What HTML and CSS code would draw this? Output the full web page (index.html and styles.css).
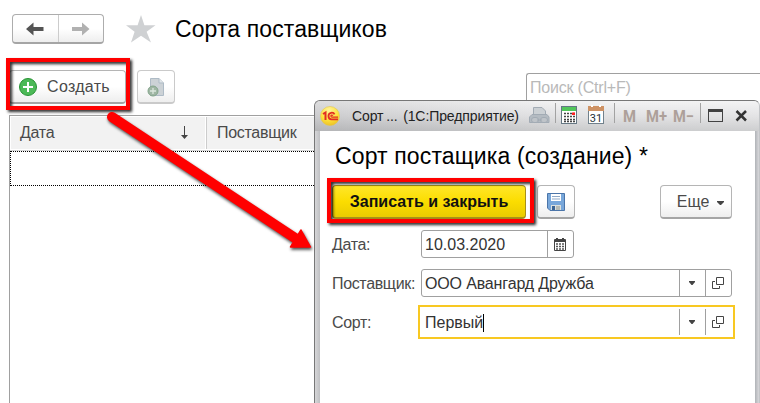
FILE: index.html
```html
<!DOCTYPE html>
<html lang="ru">
<head>
<meta charset="utf-8">
<title>Сорта поставщиков</title>
<link rel="stylesheet" href="styles.css">
</head>
<body>
<main class="page">
  <header class="heading">
    <div class="history">
      <button class="history-btn" aria-label="Назад"><svg width="18" height="14" viewBox="0 0 18 14"><path d="M0 7 7.500 .5V5H17.500V9H7.500V13.500Z" fill="#545454"/></svg></button>
      <button class="history-btn" aria-label="Вперед"><svg width="18" height="14" viewBox="0 0 18 14"><path d="M17.500 7 10 .5V5H0V9H10V13.500Z" fill="#b1b1b1"/></svg></button>
    </div>
    <svg class="star" width="30" height="28" viewBox="0 0 30 28"><path d="M15 0 18.400 10.300H29.500L20.600 16.700 25 27.500 15 20.700 5 27.500 8.600 16.700 0 10.300H11.600Z" fill="#cfd1d3"/></svg>
    <h1 class="page-title">Сорта поставщиков</h1>
  </header>
  <div class="toolbar">
    <button class="btn create"><svg width="18" height="18" viewBox="0 0 18 18"><circle cx="9" cy="9" r="8.500" fill="#4cb957" stroke="#279234"/><path d="M9 4V14M4 9H14" stroke="#fff" stroke-width="2"/></svg><span>Создать</span></button>
    <button class="btn copy" aria-label="Скопировать"><svg width="18" height="20" viewBox="0 0 18 20"><path d="M3.500 1.500H12L16.500 6V18.500H3.500Z" fill="#ccd2d6" stroke="#aebbc6"/><path d="M12 1.500V6H16.500" fill="#e1e6e9" stroke="#aebbc6"/><circle cx="6" cy="14" r="5" fill="#9fb6a4" stroke="#83a58a"/><path d="M6 11V17M3 14H9" stroke="#dce7de" stroke-width="1.300"/></svg></button>
    <div class="search">Поиск (Ctrl+F)</div>
  </div>
  <section class="table">
    <div class="table-head">
      <div class="cell date"><span>Дата</span><svg width="9" height="14" viewBox="0 0 9 14"><path d="M4.500 0V12" stroke="#444"/><path d="M1 9H8L4.500 13Z" fill="#444"/></svg></div>
      <div class="cell">Поставщик</div>
    </div>
    <div class="table-row"></div>
  </section>
</main>

<section class="dialog">
  <div class="titlebar">
    <svg class="logo" width="20" height="20" viewBox="0 0 20 20"><defs><radialGradient id="sun" cx=".45" cy=".2" r=".85"><stop offset="0" stop-color="#fff39a"/><stop offset=".6" stop-color="#fde13a"/><stop offset="1" stop-color="#eabc24"/></radialGradient></defs><circle cx="10" cy="10" r="9.500" fill="url(#sun)" stroke="#e3c64b" stroke-width=".6"/><path d="M3 8 5.500 6.500V14" fill="none" stroke="#e22d22" stroke-width="2"/><path d="M14.500 8.300C13.500 6 8.500 6 8.500 10 8.500 12.200 9.800 13.300 11.500 13.300H18" fill="none" stroke="#e22d22" stroke-width="1.800"/><path d="M13 9.500C12 8.700 10.900 9 10.900 10 10.900 10.900 11.300 11.200 12 11.200H18" fill="none" stroke="#e22d22" stroke-width="1.200"/></svg>
    <span class="window-name">Сорт ...&nbsp; (1С:Предприятие)</span>
    <svg class="tools" width="230" height="30" viewBox="0 0 230 30">
      <g stroke="#a2abb4" fill="#bfc4c9"><path d="M4.500 16V6.500H13L16.500 10V16" fill="#cbd0d4"/><path d="M3 13.500H18L20 16V21.500H.5V16Z" fill="#b4bbc2"/><rect x="2.500" y="16.500" width="7" height="5" rx="2.500"/><rect x="11.500" y="16.500" width="7" height="5" rx="2.500"/><path d="M8 19H13"/></g>
      <path d="M26.500 2V22M85.500 2V22M171.500 2V22" stroke="#a2a2a2"/>
      <rect x="32.500" y="5.500" width="15" height="17" fill="#fff" stroke="#657783"/><path d="M33 6H47V10H33Z" fill="#52c65b"/><path d="M35 12.500H46M35 15.500H46M35 18.500H46M35 20.500H46" stroke="#444" stroke-width="1.500" stroke-dasharray="2 1"/><path d="M43 11.500H46V14H43Z" fill="#ff2020"/>
      <rect x="59.500" y="6.500" width="15" height="16" fill="#fff" stroke="#71818c"/><path d="M59 5H75V10H59Z" fill="#ce9264"/><path d="M62 4H64V6H62ZM70 4H72V6H70Z" fill="#fff"/><text x="67" y="20.500" class="day">31</text>
      <g class="memory"><text x="94" y="21" textLength="13" lengthAdjust="spacingAndGlyphs">M</text><text x="117" y="21" textLength="21" lengthAdjust="spacingAndGlyphs">M+</text><text x="144" y="21" textLength="21" lengthAdjust="spacingAndGlyphs">M−</text></g>
      <rect x="179.500" y="8.500" width="14" height="12" fill="none" stroke="#424242"/><path d="M179 9.500H194" stroke="#424242" stroke-width="3"/>
      <path d="M207.500 10 217 19.500M217 10 207.500 19.500" stroke="#333" stroke-width="2.500"/>
    </svg>
  </div>
  <div class="dialog-body">
    <h2 class="dialog-title">Сорт постащика (создание) *</h2>
    <div class="actions">
      <button class="btn primary">Записать и закрыть</button>
      <button class="btn save" aria-label="Записать"><svg width="18" height="18" viewBox="0 0 18 18"><path d="M.5 .5H17.500V17.500H3L.5 15Z" fill="#78a7da" stroke="#4b75a9"/><path d="M4 1H14V8H4Z" fill="#fff"/><path d="M5 3.500H13M5 6H13" stroke="#8ea9c8"/><path d="M4 12H14V17H4Z" fill="#dce0dd"/><path d="M9 13H13V17H9Z" fill="#b5bab5"/><path d="M5 13H8V17H5Z" fill="#3b6494"/></svg></button>
      <button class="btn more"><span>Еще</span><svg width="7" height="4" viewBox="0 0 7 4"><path d="M0 0H7V1L4 4H3L0 1Z" fill="#444"/></svg></button>
    </div>
    <div class="form">
      <label class="label">Дата:</label>
      <div class="field date-field"><span class="value date-value">10.03.2020</span><span class="field-btn"><svg width="12" height="13" viewBox="0 0 12 13"><path d="M0 2Q0 1 1 1H2V0H4V1H8V0H10V1H11Q12 1 12 2V12Q12 13 11 13H1Q0 13 0 12Z" fill="#444"/><path d="M1 4H11V12H1Z" fill="#fff"/><path d="M2 6H10M2 8.500H10M2 11H10" stroke="#555" stroke-width="1.300" stroke-dasharray="2 1"/></svg></span></div>
      <label class="label">Поставщик:</label>
      <div class="field"><span class="value">ООО Авангард Дружба</span><span class="field-btn drop"><svg width="6" height="4" viewBox="0 0 6 4"><path d="M0 0H6V1L3.500 4H2.500L0 1Z" fill="#444"/></svg></span><span class="field-btn open"><svg width="12" height="12" viewBox="0 0 12 12" fill="none" stroke="#444"><path d="M4.500 .5H11.500V7.500H4.500ZM3 4.500H.5V11.500H7.500V9"/></svg></span></div>
      <label class="label">Сорт:</label>
      <div class="field focused"><span class="value">Первый<i class="caret"></i></span><span class="field-btn drop"><svg width="6" height="4" viewBox="0 0 6 4"><path d="M0 0H6V1L3.500 4H2.500L0 1Z" fill="#444"/></svg></span><span class="field-btn open"><svg width="12" height="12" viewBox="0 0 12 12" fill="none" stroke="#444"><path d="M4.500 .5H11.500V7.500H4.500ZM3 4.500H.5V11.500H7.500V9"/></svg></span></div>
    </div>
  </div>
</section>

<div class="marker marker-create"></div>
<div class="marker marker-save"></div>
<svg class="arrow" width="760" height="403" viewBox="0 0 760 403"><path d="M112 117 298 240" stroke="#f00" stroke-width="10" stroke-linecap="round"/><path d="M301 230 310.500 247H290.500Z" fill="#f00" stroke="#f00" stroke-linejoin="round" stroke-width="1.500"/></svg>
</body>
</html>
```

FILE: styles.css
```css
* { box-sizing: border-box; }
body {
  margin: 0;
  width: 760px;
  height: 403px;
  overflow: hidden;
  position: relative;
  background: #fff;
  color: #4a4a4a;
  font: 16px "Liberation Sans", Arial, sans-serif;
}
svg { display: block; flex: none; }
button { font: inherit; color: inherit; padding: 0; margin: 0; }
h1, h2 { margin: 0; font-weight: 400; color: #000; white-space: nowrap; }

.page { padding: 14px 0 0 9px; }
.heading { display: flex; height: 30px; align-items: center; padding-left: 3px; }
.history {
  display: flex;
  width: 92px;
  height: 30px;
  border: 1px solid #adadad;
  border-bottom: 2px solid #a5a5a5;
  border-radius: 4px;
  background: linear-gradient(#fff 50%, #eee);
}
.history-btn {
  flex: 1;
  display: flex;
  align-items: center;
  justify-content: center;
  border: 0;
  background: none;
}
.history-btn + .history-btn { border-left: 1px solid #ccc; }
.star { margin-left: 22px; }
.page-title { margin-left: 19px; font-size: 23px; line-height: 30px; letter-spacing: 0.1px; }

.toolbar { display: flex; margin-top: 26px; height: 34px; }
.btn {
  display: flex;
  flex: none;
  align-items: center;
  justify-content: center;
  height: 34px;
  border: 1px solid #b5b5b5;
  border-bottom: 2px solid #a5a5a5;
  border-radius: 4px;
  background: linear-gradient(#fff 50%, #eee);
  white-space: nowrap;
}
.create { width: 117px; gap: 10px; padding-right: 6px; letter-spacing: 0.3px; }
.copy { width: 38px; margin-left: 11px; border-color: #cacaca; }
.search {
  width: 234px;
  height: 34px;
  margin: 3px 0 0 351px;
  padding-left: 3px;
  flex: none;
  border: 1px solid #a0a0a0;
  border-right: 0;
  border-radius: 3px 0 0 3px;
  color: #b9b9b9;
  line-height: 28px;
  letter-spacing: -0.2px;
}

.table { margin-top: 11px; height: 300px; border: 1px solid #a0a0a0; border-right: 0; }
.table-head { display: flex; height: 35px; padding: 1px; gap: 2px; border-bottom: 1px solid #d6d6d6; }
.cell { flex: 1; background: #f2f2f2; padding-left: 10px; line-height: 32px; letter-spacing: -0.3px; }
.cell + .cell { box-shadow: -1px 0 #ccc; }
.date { flex: 0 0 194px; display: flex; align-items: center; justify-content: space-between; padding: 0 16px 0 9px; }
.table-row { height: 35px; border: 1px dotted #000; }

.dialog {
  position: absolute;
  left: 314px;
  top: 100px;
  width: 446px;
  height: 320px;
  border: 1px solid #777;
  border-right: 1px solid #c3c5c8;
  border-radius: 6px 6px 0 0;
  background: linear-gradient(90deg, #d6d6d8, #bfc0c3 5px, #b0b3b7 440px, #d8d8db);
}
.titlebar {
  display: flex;
  align-items: center;
  height: 30px;
  padding-left: 5px;
  border-radius: 5px 5px 0 0;
  background: linear-gradient(90deg, rgba(170, 170, 172, .25), rgba(255, 255, 255, .25) 55%, rgba(255, 255, 255, .3)), linear-gradient(#eeeeef, #d8d8da 50%, #b8b9bb);
  color: #222;
}
.window-name { width: 170px; margin-left: 12px; font-size: 14px; letter-spacing: -0.1px; word-spacing: -1px; white-space: pre; }
.tools { margin-left: 9px; }
.day { font: 11px Roboto, sans-serif; fill: #263238; text-anchor: middle; }
.memory { font: bold 16px Roboto, sans-serif; fill: #ada099; }
.dialog-body { height: 290px; margin: 0 4px 0 5px; padding: 11px 0 0 12px; background: #fff; }
.dialog-title { font-size: 23px; line-height: 28px; padding-left: 3px; letter-spacing: 0.13px; }
.actions { display: flex; width: 400px; margin-top: 15px; }
.primary {
  width: 194px;
  border: 1px solid #a89018;
  border-bottom: 2px solid #a89018;
  background: linear-gradient(#ffe629, #fbdd00 50%, #eacb00);
  color: #111;
  font-weight: 700;
}
.save { width: 38px; margin-left: 11px; }
.more { width: 72px; margin-left: auto; gap: 8px; padding-left: 9px; }
.more svg { margin-top: 2px; }

.form { display: grid; grid-template-columns: 89px 311px; row-gap: 10px; margin-top: 11px; }
.label { line-height: 29px; white-space: nowrap; letter-spacing: -0.35px; }
.field {
  display: flex;
  height: 28px;
  margin-bottom: 1px;
  border: 1px solid #a0a0a0;
  border-radius: 3px;
  background: #fff;
  color: #333;
}
.value { flex: 1; padding-left: 3px; line-height: 27px; white-space: nowrap; letter-spacing: -0.15px; }
.date-value { letter-spacing: 0; }
.date-field { width: 153px; }
.field-btn { display: flex; flex: 0 0 26px; align-items: center; justify-content: center; border-left: 1px solid #a0a0a0; }
.date-field .field-btn, .open { padding-right: 1px; }
.drop { padding-right: 1px; }
.focused {
  border-color: transparent;
  border-radius: 0;
  outline: 2px solid #f8c822;
  outline-offset: 1px;
}
.focused .value { letter-spacing: 0; }
.caret { display: inline-block; width: 1px; height: 18px; background: #000; vertical-align: -4px; }

.marker { position: absolute; border: 4px solid #f00; filter: drop-shadow(2px 2px 1.5px rgba(0, 0, 0, .85)); }
.marker-create { left: 6px; top: 58px; width: 124px; height: 52px; }
.marker-save { left: 327px; top: 178px; width: 207px; height: 45px; }
.arrow { position: absolute; left: 0; top: 0; pointer-events: none; filter: drop-shadow(1px 2px 1.5px rgba(0, 0, 0, .7)); }
```
